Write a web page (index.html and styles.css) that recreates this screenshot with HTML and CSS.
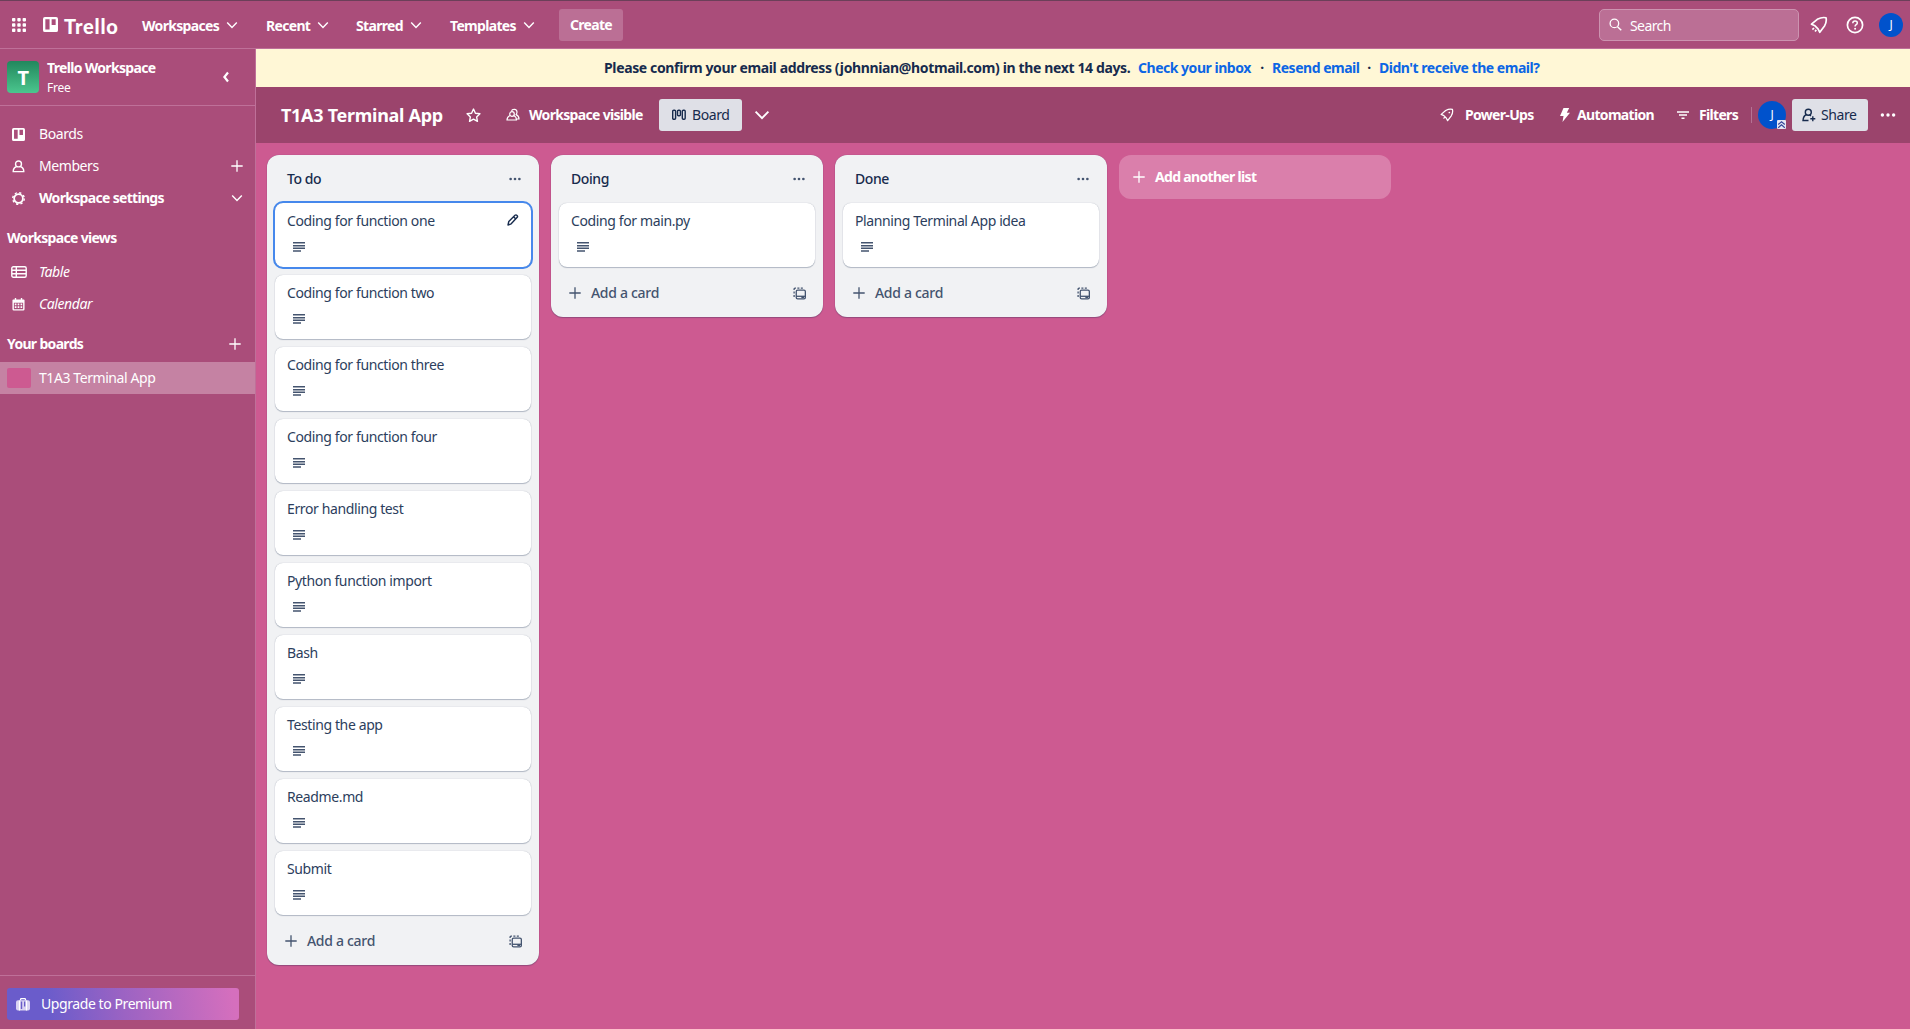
FILE: index.html
```html
<!DOCTYPE html>
<html lang="en">
<head>
<meta charset="utf-8">
<title>T1A3 Terminal App | Trello</title>
<link rel="stylesheet" href="styles.css">
</head>
<body>
<svg class="sprite" aria-hidden="true">
  <symbol id="chev" viewBox="0 0 12 12"><path d="M1.2 3.4 6 8.4l4.800-5" fill="none" stroke="currentColor" stroke-width="1.400"/></symbol>
  <symbol id="plus" viewBox="0 0 12 12"><path d="M6 .3v11.400M.3 6h11.400" fill="none" stroke="currentColor" stroke-width="1.300"/></symbol>
  <symbol id="dots" viewBox="0 0 16 16"><g fill="currentColor"><circle cx="3" cy="8" r="1.500"/><circle cx="8" cy="8" r="1.500"/><circle cx="13" cy="8" r="1.500"/></g></symbol>
  <symbol id="board" viewBox="0 0 16 16"><path fill="currentColor" fill-rule="evenodd" d="M2 0h12a2 2 0 0 1 2 2v12a2 2 0 0 1-2 2H2a2 2 0 0 1-2-2V2a2 2 0 0 1 2-2zM2.500 2.300v11h4.500v-11zM9.200 2.300v6.200h4.300V2.300z"/></symbol>
  <symbol id="lines" viewBox="0 0 12 10"><path d="M0 .8h12M0 3.700h12M0 6.300h12M0 9.100h8" stroke="currentColor" stroke-width="1.500"/></symbol>
  <symbol id="template" viewBox="0 0 14 14"><g fill="none" stroke="currentColor" stroke-width="1.400"><path d="M1.200 3.200V2.200q0-1 1-1h1M4.700 1.200h2.200M8.400 1.200h2.200M1.200 4.800v2.200M1.200 8.500v2.300"/><rect x="3.500" y="3.400" width="9.800" height="9.300" rx="1.500"/><path d="M3.500 10h9.800"/></g><path d="M9 10h3v2H9z" fill="currentColor"/></symbol>
  <symbol id="rocket" viewBox="0 0 18 18"><path d="M1.500 8.200 7.300 3.300Q12 .8 16 1.800q1 4-1.500 8.200l-4.700 6.300-1.800-3.500-3-3zM4 12l-1.600 1.600M6.300 13.900l-1.300 1.600" fill="none" stroke="currentColor" stroke-width="1.700" stroke-linejoin="round"/></symbol>
  <symbol id="rocket-eye" viewBox="0 0 18 18"><path d="M1.500 8.200 7.300 3.300Q12 .8 16 1.800q1 4-1.500 8.200l-4.700 6.300-1.800-3.500-3-3zM6 12l-1.500 1.500" fill="none" stroke="currentColor" stroke-width="1.600" stroke-linejoin="round"/><circle cx="12" cy="5.800" r="1.100" fill="currentColor"/></symbol>
</svg>

<header class="topbar">
  <svg class="apps" viewBox="0 0 14 14"><g fill="#fff"><rect width="3.400" height="3.400" rx=".8"/><rect x="5.300" width="3.400" height="3.400" rx=".8"/><rect x="10.600" width="3.400" height="3.400" rx=".8"/><rect y="5.300" width="3.400" height="3.400" rx=".8"/><rect x="5.300" y="5.300" width="3.400" height="3.400" rx=".8"/><rect x="10.600" y="5.300" width="3.400" height="3.400" rx=".8"/><rect y="10.600" width="3.400" height="3.400" rx=".8"/><rect x="5.300" y="10.600" width="3.400" height="3.400" rx=".8"/><rect x="10.600" y="10.600" width="3.400" height="3.400" rx=".8"/></g></svg>
  <a class="logo"><svg><use href="#board"/></svg><span>Trello</span></a>
  <nav class="menu">
    <a class="m1"><span>Workspaces</span><svg><use href="#chev"/></svg></a>
    <a class="m2"><span>Recent</span><svg><use href="#chev"/></svg></a>
    <a class="m3"><span>Starred</span><svg><use href="#chev"/></svg></a>
    <a class="m4"><span>Templates</span><svg><use href="#chev"/></svg></a>
  </nav>
  <button class="create">Create</button>
  <div class="search"><svg viewBox="0 0 14 14"><circle cx="5.800" cy="5.800" r="4.600" fill="none" stroke="#fff" stroke-width="1.400"/><path d="m9.200 9.400 4 3.900" stroke="#fff" stroke-width="1.500"/></svg><span>Search</span></div>
  <svg class="bell"><use href="#rocket"/></svg>
  <svg class="help" viewBox="0 0 18 18"><circle cx="9" cy="9" r="7.600" fill="none" stroke="#fff" stroke-width="1.700"/><path d="M6.800 7.300c0-3 4.500-2.800 4.500-.2 0 1.600-2.200 1.600-2.200 3.300" fill="none" stroke="#fff" stroke-width="1.500"/><circle cx="9.100" cy="12.700" r="1" fill="#fff"/></svg>
  <span class="avatar small">J</span>
</header>

<div class="page">
  <aside class="sidebar">
    <div class="workspace">
      <span class="ws-logo">T</span>
      <div class="ws-name"><b>Trello Workspace</b><small>Free</small></div>
      <svg class="collapse" viewBox="0 0 8 12"><path d="M6 1.500 2.400 6 6 10.500" fill="none" stroke="#fff" stroke-width="2.200"/></svg>
    </div>
    <div class="side-main">
      <a class="item"><svg class="ic"><use href="#board"/></svg><span>Boards</span></a>
      <a class="item"><svg class="ic" viewBox="0 0 14 14"><g fill="none" stroke="#fff" stroke-width="1.500"><circle cx="7" cy="4.200" r="3.200"/><path d="M4.700 7.300C2.500 8 1.300 9.500 1.300 12.500h11.400c0-3-1.200-4.500-3.400-5.200"/></g></svg><span>Members</span><svg class="act"><use href="#plus"/></svg></a>
      <a class="item"><svg class="ic" viewBox="0 0 14 14"><circle cx="7" cy="7" r="4.700" fill="none" stroke="#fff" stroke-width="1.900"/><circle cx="7" cy="7" r="6.200" fill="none" stroke="#fff" stroke-width="1.500" stroke-dasharray="2.400 2.470"/></svg><b>Workspace settings</b><svg class="act"><use href="#chev"/></svg></a>
      <h2><span>Workspace views</span></h2>
      <a class="item"><svg class="ic wide" viewBox="0 0 16 12"><g fill="none" stroke="#fff" stroke-width="1.400"><rect x=".8" y=".8" width="14.400" height="10.400" rx="1.500"/><path d="M5.300 1v10M1 4.200h14M1 7.700h14"/></g></svg><i>Table</i></a>
      <a class="item"><svg class="ic" viewBox="0 0 14 14"><path fill="#fff" fill-rule="evenodd" d="M3 0h1.500v1.500h5V0H11v1.500h1.500q1 0 1 1V12q0 1.500-1.500 1.500H2Q.5 13.500.5 12V2.500q0-1 1-1H3zM2 5v7h10V5zM3 6h1.800v1.800H3zM6.100 6h1.800v1.800H6.100zM9.200 6H11v1.800H9.200zM3 9h1.800v1.800H3zM6.100 9h1.800v1.800H6.100zM9.200 9H11v1.800H9.200z"/></svg><i>Calendar</i></a>
      <h2><span>Your boards</span><svg class="act"><use href="#plus"/></svg></h2>
      <a class="item current"><span class="swatch"></span><span>T1A3 Terminal App</span></a>
    </div>
    <div class="side-foot"><button class="upgrade"><svg viewBox="0 0 14 13"><path d="M4.500 2.500V1.600q0-1 1-1h3q1 0 1 1v.9" fill="none" stroke="#fff" stroke-width="1.300"/><rect y="2.300" width="14" height="10.200" rx="2" fill="#d9d2f2"/><path d="M3.500 2.500v10M10.500 2.500v10" stroke="#fff" stroke-width="1.200"/><path d="M4.800 3.500h1.400v7.500H4.800zM8 3.500h1.300v5H8z" fill="#6a5cc8"/></svg><span>Upgrade to Premium</span></button></div>
  </aside>

  <main>
    <div class="banner"><span class="confirm">Please confirm your email address (johnnian@hotmail.com) in the next 14 days.</span><a class="l1">Check your inbox</a><span class="sep">·</span><a class="l2">Resend email</a><span class="sep">·</span><a class="l3">Didn't receive the email?</a></div>
    <div class="board-head">
      <h1>T1A3 Terminal App</h1>
      <svg class="star" viewBox="0 0 14 14"><path d="m7 1 1.800 3.900 4.200.5-3.100 2.900.8 4.200L7 10.400l-3.700 2.100.8-4.200L1 5.400l4.200-.5z" fill="none" stroke="#fff" stroke-width="1.300" stroke-linejoin="round"/></svg>
      <svg class="people" viewBox="0 0 14 14"><g fill="none" stroke="#fff" stroke-width="1.200"><circle cx="6" cy="6" r="2.300"/><path d="M4 7.500C2 8.500 1 10 1 12h9.500c0-2-.8-3.500-2.700-4.500M5.500 3.300C6 .6 11 .5 11 4c0 1.400-.6 2-.9 2.600 2 .9 2.900 2.200 2.900 4.400h-2"/></g></svg>
      <b class="visible">Workspace visible</b>
      <button class="view"><svg viewBox="0 0 14 12"><g fill="none" stroke="#172b4d" stroke-width="1.400"><rect x=".7" y="1.200" width="2.900" height="9" rx="1"/><rect x="5.500" y="1.200" width="2.900" height="5.500" rx="1"/><rect x="10.300" y="1.200" width="2.900" height="9" rx="1"/></g></svg><span>Board</span></button>
      <svg class="more-views"><use href="#chev"/></svg>
      <div class="tools">
        <svg class="t-rocket"><use href="#rocket-eye"/></svg><b class="powerups">Power-Ups</b>
        <svg class="bolt" viewBox="0 0 10 14"><path d="M3.500 0h5.700L6.800 4.700H10L2.500 14l1-6H0z" fill="#fff"/></svg><b class="automation">Automation</b>
        <svg class="filter" viewBox="0 0 12 9"><path d="M0 1h12M2 4h8M4.500 7.300h3" stroke="#fff" stroke-width="1.400"/></svg><b class="filters">Filters</b>
        <span class="rule"></span>
        <span class="avatar">J<svg class="badge" viewBox="0 0 9 9"><rect width="9" height="9" rx="1" fill="#e6e8f4"/><path d="m1.200 4.500 3.300-2.800 3.300 2.800M1.200 7.700l3.300-2.800 3.300 2.800" fill="none" stroke="#35479b" stroke-width="1.200"/></svg></span>
        <button class="share"><svg viewBox="0 0 14 14"><g fill="none" stroke="#172b4d" stroke-width="1.400"><circle cx="6.300" cy="4.200" r="3"/><path d="M4.500 6.500C2 7.500 1.200 9.500 1 12.500h5.500M7.500 7l1.500.8M10.800 8.200v5M8.300 10.700h5"/></g></svg><span>Share</span></button>
        <svg class="menu-dots"><use href="#dots"/></svg>
      </div>
    </div>

    <div class="lists">
      <section class="list">
        <h3><span>To do</span><svg><use href="#dots"/></svg></h3>
        <article class="card focus"><span>Coding for function one</span><svg class="lines"><use href="#lines"/></svg><svg class="pencil" viewBox="0 0 12 12"><path d="m1 11 .8-3.600L8 1.300q1-.9 2 .1t.2 1.900L4.200 9.800zM6.800 3l2 2" fill="none" stroke="#172b4d" stroke-width="1.400" stroke-linejoin="round"/></svg></article>
        <article class="card"><span>Coding for function two</span><svg class="lines"><use href="#lines"/></svg></article>
        <article class="card"><span>Coding for function three</span><svg class="lines"><use href="#lines"/></svg></article>
        <article class="card"><span>Coding for function four</span><svg class="lines"><use href="#lines"/></svg></article>
        <article class="card"><span>Error handling test</span><svg class="lines"><use href="#lines"/></svg></article>
        <article class="card"><span>Python function import</span><svg class="lines"><use href="#lines"/></svg></article>
        <article class="card"><span>Bash</span><svg class="lines"><use href="#lines"/></svg></article>
        <article class="card"><span>Testing the app</span><svg class="lines"><use href="#lines"/></svg></article>
        <article class="card"><span>Readme.md</span><svg class="lines"><use href="#lines"/></svg></article>
        <article class="card"><span>Submit</span><svg class="lines"><use href="#lines"/></svg></article>
        <footer><svg class="plus"><use href="#plus"/></svg><span>Add a card</span><svg class="tpl"><use href="#template"/></svg></footer>
      </section>
      <section class="list">
        <h3><span>Doing</span><svg><use href="#dots"/></svg></h3>
        <article class="card"><span>Coding for main.py</span><svg class="lines"><use href="#lines"/></svg></article>
        <footer><svg class="plus"><use href="#plus"/></svg><span>Add a card</span><svg class="tpl"><use href="#template"/></svg></footer>
      </section>
      <section class="list">
        <h3><span>Done</span><svg><use href="#dots"/></svg></h3>
        <article class="card"><span>Planning Terminal App idea</span><svg class="lines"><use href="#lines"/></svg></article>
        <footer><svg class="plus"><use href="#plus"/></svg><span>Add a card</span><svg class="tpl"><use href="#template"/></svg></footer>
      </section>
      <button class="add-list"><svg><use href="#plus"/></svg><span>Add another list</span></button>
    </div>
  </main>
</div>
</body>
</html>
```
FILE: styles.css
```css
* { box-sizing: border-box; }
body { margin: 0; height: 1029px; display: flex; flex-direction: column; overflow: hidden; background: #cd5a91; color: #fff; font: 14px/20px "Noto Sans", "Open Sans", sans-serif; letter-spacing: -.42px; }
svg { display: block; flex: none; }
span, b, i, a { white-space: nowrap; }
button { font: inherit; letter-spacing: inherit; border: 0; padding: 0; color: inherit; text-align: left; white-space: nowrap; }
b, h2, .menu, .create, .banner, .add-list { font-weight: 700; letter-spacing: -.68px; }
.sprite { position: absolute; width: 0; height: 0; }

.topbar { height: 49px; flex: none; display: flex; align-items: center; background: #aa4d7a; border-top: 1px solid #6b3f59; border-bottom: 1px solid #bf7099; padding: 0 7px 0 12px; }
.apps { width: 14px; height: 14px; }
.logo { display: flex; align-items: center; width: 87px; margin-left: 17px; }
.logo svg { width: 15px; height: 15px; }
.logo span { margin-left: 6px; padding-top: 2px; font: 900 20px/24px Lato, sans-serif; letter-spacing: .8px; }
.menu { display: flex; margin-left: 12px; }
.menu a { display: flex; align-items: center; justify-content: space-between; }
.menu span { padding-top: 2px; }
.menu svg { width: 12px; height: 12px; }
.m1 { width: 96px; }
.m2 { width: 63px; margin-left: 28px; }
.m3 { width: 66px; margin-left: 27px; }
.m4 { width: 85px; margin-left: 28px; }
.create { width: 64px; height: 32px; padding-top: 1px; margin-left: 24px; text-align: center; border-radius: 3px; background: #bb6f95; }
.search { width: 200px; height: 32px; margin-left: auto; display: flex; align-items: center; gap: 8px; padding-left: 9px; border: 1px solid #cc93b0; border-radius: 5px; background: #bb6f95; letter-spacing: -.6px; }
.search span { padding-top: 2px; }
.search svg { width: 13px; height: 13px; }
.bell { width: 18px; height: 18px; margin-left: 11px; }
.help { width: 18px; height: 18px; margin-left: 18px; }
.avatar { position: relative; width: 28px; height: 28px; border-radius: 50%; background: #0052cc; display: flex; align-items: center; justify-content: center; font-size: 12px; }
.avatar.small { width: 24px; height: 24px; margin-left: 15px; }

.page { flex: 1; min-height: 0; display: flex; }
.sidebar { width: 256px; flex: none; display: flex; flex-direction: column; background: #aa4d7a; border-right: 1px solid #bf7099; }
.workspace { height: 57px; flex: none; display: flex; align-items: center; padding: 0 25px 0 7px; border-bottom: 1px solid #bf7099; }
.ws-logo { width: 32px; height: 32px; border-radius: 4px; background: linear-gradient(#22875d, #4bc68e); text-align: center; font-size: 20px; line-height: 33px; font-weight: 700; }
.ws-name { flex: 1; margin-left: 8px; padding-top: 1px; display: flex; flex-direction: column; }
.ws-name small { font-size: 12px; letter-spacing: -.2px; }
.collapse { width: 8px; height: 12px; }
.side-main { flex: 1; padding-top: 12px; }
.item { height: 32px; display: flex; align-items: center; padding: 0 12px; }
.ic { width: 13px; height: 13px; margin-right: 14px; }
.ic.wide { width: 16px; height: 12px; margin: 0 12px 0 -1px; }
.act { width: 12px; height: 12px; margin-left: auto; }
h2 { margin: 14px 0 8px; padding: 0 14px 0 7px; height: 20px; display: flex; align-items: center; font-size: 14px; line-height: 20px; }
.item.current { background: #c582a3; padding-left: 7px; }
.swatch { width: 24px; height: 20px; margin-right: 8px; border-radius: 2px; background: #cd5a91; }
.side-foot { height: 54px; padding: 12px 16px 0 7px; border-top: 1px solid #bf7099; }
.upgrade { width: 232px; height: 32px; display: flex; align-items: center; padding-left: 9px; gap: 11px; border-radius: 3px; background: linear-gradient(82deg, #6a5ccb 18%, #9b63c3 50%, #d56fbd 97%); }
.upgrade svg { width: 14px; height: 13px; }

main { flex: 1; min-width: 0; display: flex; flex-direction: column; }
.banner { height: 38px; flex: none; display: flex; align-items: center; padding-left: 348px; background: #fff7d6; color: #172b4d; letter-spacing: -.48px; }
.banner a { color: #0c66e4; }
.confirm { width: 526px; margin-right: 8px; letter-spacing: -.36px; }
.l1 { width: 114px; } .l2 { width: 87px; }
.sep { width: 20px; text-align: center; }
.board-head { height: 56px; flex: none; display: flex; align-items: center; padding: 0 14px 0 25px; background: #9b446c; }
h1 { width: 163px; margin: 0 22px 0 0; font-size: 18px; line-height: 24px; font-weight: 700; letter-spacing: -.28px; white-space: nowrap; }
.star { width: 15px; height: 15px; }
.people { width: 14px; height: 14px; margin-left: 25px; }
.visible { width: 114px; margin-left: 9px; }
.view { width: 83px; height: 32px; margin-left: 16px; display: flex; align-items: center; gap: 6px; padding-left: 13px; border-radius: 3px; background: #dfe0e7; color: #172b4d; }
.view svg { width: 14px; height: 12px; }
.more-views { width: 16px; height: 16px; margin-left: 12px; }
.tools { margin-left: auto; display: flex; align-items: center; }
.t-rocket { width: 14px; height: 14px; margin-right: 11px; }
.powerups { width: 70px; }
.bolt { width: 10px; height: 14px; margin: 0 7px 0 25px; }
.automation { width: 76px; }
.filter { width: 12px; height: 9px; margin: 0 10px 0 24px; }
.filters { width: 39px; }
.rule { width: 1px; height: 16px; margin: 0 6px 0 13px; background: #b57293; }
.badge { position: absolute; right: 0; bottom: 0; width: 9px; height: 9px; }
.share { width: 76px; height: 32px; margin-left: 6px; display: flex; align-items: center; gap: 5px; padding-left: 10px; border-radius: 3px; background: #dfe0e7; color: #172b4d; }
.share svg { width: 14px; height: 14px; }
.menu-dots { width: 18px; height: 18px; margin: 0 -1px 0 11px; }

.lists { flex: 1; display: flex; align-items: flex-start; gap: 12px; padding: 12px 11px; }
.list { width: 272px; display: flex; flex-direction: column; gap: 8px; padding: 0 8px 8px; border-radius: 12px; background: #f1f2f4; box-shadow: 0 1px 1px #091e4240, 0 0 1px #091e424f; color: #172b4d; }
h3 { height: 40px; margin: 0; padding: 8px 8px 0 12px; display: flex; align-items: center; justify-content: space-between; font-size: 14px; line-height: 20px; font-weight: 500; }
h3 svg { width: 16px; height: 16px; color: #44546f; padding: 1px; }
.card { position: relative; height: 64px; padding: 8px 12px; border-radius: 8px; background: #fff; box-shadow: 0 1px 1px #091e4240, 0 0 1px #091e424f; display: flex; flex-direction: column; color: #2c3e5d; letter-spacing: -.38px; }
.card.focus { outline: 2px solid #4688ec; }
.lines { width: 12px; height: 10px; margin: 11px 0 0 6px; color: #44546f; }
.pencil { position: absolute; top: 11px; right: 12px; width: 12px; height: 12px; }
.list footer { height: 34px; display: flex; align-items: center; padding: 2px 9px 0 10px; font-weight: 500; letter-spacing: -.3px; color: #44546f; }
.plus { width: 12px; height: 12px; margin-right: 10px; }
.tpl { width: 13px; height: 13px; margin-left: auto; }
.add-list { width: 272px; height: 44px; display: flex; align-items: center; gap: 10px; padding-left: 14px; border-radius: 12px; background: #da7fab; }
.add-list svg { width: 12px; height: 12px; }
```
